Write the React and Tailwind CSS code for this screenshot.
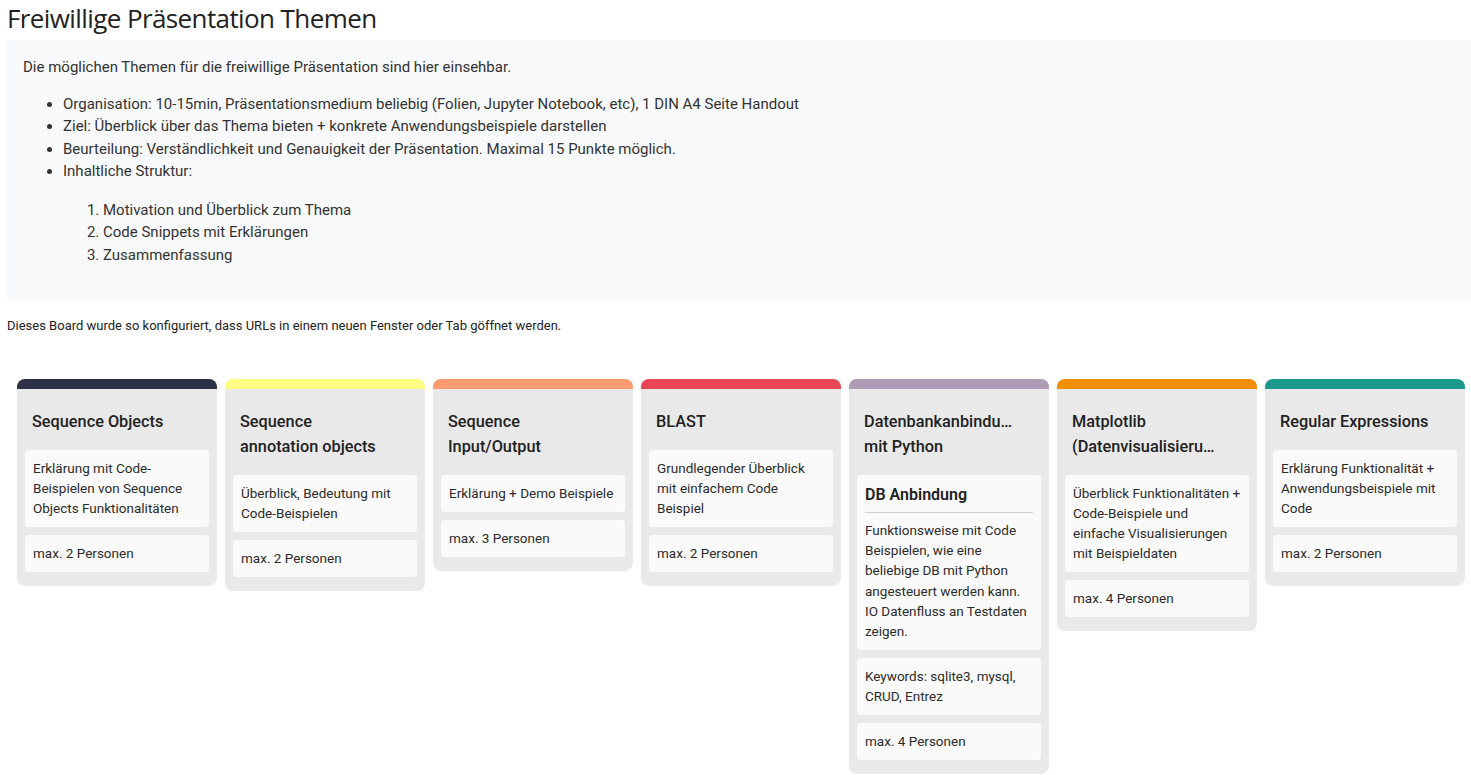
import React from "react";

// board columns, each with a top colour bar and a list of cards
const columns = [
  {
    color: "bg-[#2d3047]",
    title: "Sequence Objects",
    cards: [
      { text: "Erklärung mit Code-Beispielen von Sequence Objects Funktionalitäten" },
      { text: "max. 2 Personen" },
    ],
  },
  {
    color: "bg-[#fffd82]",
    title: "Sequence annotation objects",
    cards: [
      { text: "Überblick, Bedeutung mit Code-Beispielen" },
      { text: "max. 2 Personen" },
    ],
  },
  {
    color: "bg-[#ff9b71]",
    title: "Sequence Input/Output",
    cards: [{ text: "Erklärung + Demo Beispiele" }, { text: "max. 3 Personen" }],
  },
  {
    color: "bg-[#e84855]",
    title: "BLAST",
    cards: [
      { text: "Grundlegender Überblick mit einfachem Code Beispiel" },
      { text: "max. 2 Personen" },
    ],
  },
  {
    color: "bg-[#b09bb6]",
    title: "Datenbankanbindung mit Python",
    cards: [
      {
        heading: "DB Anbindung",
        text: "Funktionsweise mit Code Beispielen, wie eine beliebige DB mit Python angesteuert werden kann. IO Datenfluss an Testdaten zeigen.",
      },
      { text: "Keywords: sqlite3, mysql, CRUD, Entrez" },
      { text: "max. 4 Personen" },
    ],
  },
  {
    color: "bg-[#f18f01]",
    title: "Matplotlib (Datenvisualisierung)",
    cards: [
      {
        text: "Überblick Funktionalitäten + Code-Beispiele und einfache Visualisierungen mit Beispieldaten",
      },
      { text: "max. 4 Personen" },
    ],
  },
  {
    color: "bg-[#1b998b]",
    title: "Regular Expressions",
    cards: [
      { text: "Erklärung Funktionalität + Anwendungsbeispiele mit Code" },
      { text: "max. 2 Personen" },
    ],
  },
];

function Column({ col }) {
  return (
    <div className="w-[200px] shrink-0 rounded-lg bg-[#e9e9e9] overflow-hidden pb-[14px]">
      <div className={`h-[10px] ${col.color}`} />
      <div className="pl-[15px] pr-[35px] pt-[20px] pb-[16px]">
        {/* long words get cut with an ellipsis, like the board does */}
        <h3 className="text-[16.3px] leading-[25px] font-medium text-[#212121] overflow-hidden text-ellipsis">
          {col.title}
        </h3>
      </div>
      <div className="flex flex-col gap-2 px-2">
        {col.cards.map((c, i) => (
          <div
            key={i}
            className="bg-[#fafafa] rounded px-2 pt-2 pb-[9px] text-[13.5px] leading-[20px] text-[#2b2b2b]"
          >
            {c.heading && (
              <div className="font-semibold text-[16px] leading-[22px] text-[#212121] pt-[1px] pb-[6px] mb-[7px] border-b border-[#cfcfcf]">
                {c.heading}
              </div>
            )}
            <p className={c.heading ? "leading-[20.2px]" : ""}>{c.text}</p>
          </div>
        ))}
      </div>
    </div>
  );
}

export default function App() {
  return (
    <div className="min-h-screen bg-white font-['Roboto',sans-serif] text-[#333]">
      {/* page heading */}
      <h1 className="px-[7px] pt-[1px] text-[26px] leading-[34px] text-[#222] font-['Open_Sans',sans-serif] tracking-[-0.6px]">
        Freiwillige Präsentation Themen
      </h1>

      {/* description box */}
      <div className="ml-[7px] mt-[5px] rounded bg-[#f8f9fa] px-4 pt-4 pb-[20px] text-[15px] leading-[22.5px]">
        <p className="mb-[14px]">
          Die möglichen Themen für die freiwillige Präsentation sind hier einsehbar.
        </p>
        <ul className="list-disc pl-[40px] mb-[14px]">
          <li>
            Organisation: 10-15min, Präsentationsmedium beliebig (Folien, Jupyter Notebook, etc), 1 DIN A4 Seite Handout
          </li>
          <li>Ziel: Überblick über das Thema bieten + konkrete Anwendungsbeispiele darstellen</li>
          <li>Beurteilung: Verständlichkeit und Genauigkeit der Präsentation. Maximal 15 Punkte möglich.</li>
          <li>
            Inhaltliche Struktur:
            <ol className="list-decimal pl-[40px] mt-[16px]">
              <li>Motivation und Überblick zum Thema</li>
              <li>Code Snippets mit Erklärungen</li>
              <li>Zusammenfassung</li>
            </ol>
          </li>
        </ul>
      </div>

      <p className="px-[7px] mt-[17px] text-[13px] leading-[18px] text-[#222]">
        Dieses Board wurde so konfiguriert, dass URLs in einem neuen Fenster oder Tab göffnet werden.
      </p>

      {/* board */}
      <div className="flex items-start gap-2 pl-[17px] mt-[44px]">
        {columns.map((col, i) => (
          <Column key={i} col={col} />
        ))}
      </div>
    </div>
  );
}
